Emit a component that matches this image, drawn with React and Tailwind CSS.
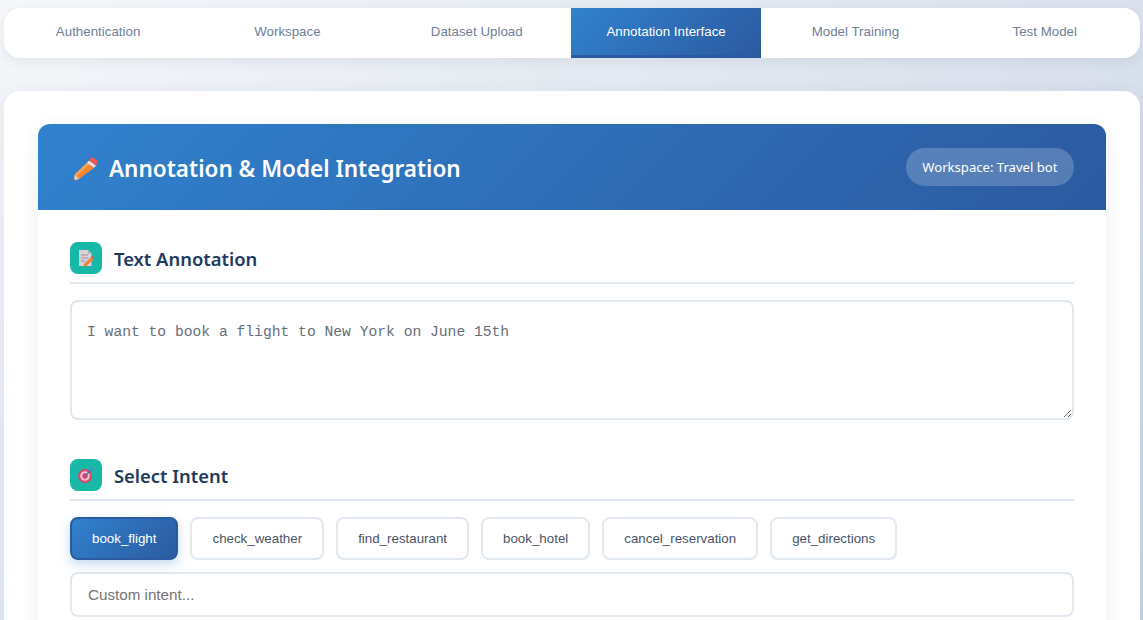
import React from 'react';

const TABS = ['Authentication', 'Workspace', 'Dataset Upload', 'Annotation Interface', 'Model Training', 'Test Model'];
const INTENTS = ['book_flight', 'check_weather', 'find_restaurant', 'book_hotel', 'cancel_reservation', 'get_directions'];

function PencilIcon() {
  return (
    <svg width="28" height="26" viewBox="0 0 28 26">
      <path d="M4.7 18.5 L16.7 7 L24.3 11.8 L9.3 22.8 Z" fill="#f58634" />
      <path d="M4.7 18.5 L16.7 7 L19 8.5 L6.5 20.2 Z" fill="#fba354" />
      <path d="M4.7 18.5 L9.3 22.8 L3.6 25 Z" fill="#f3c9a0" />
      <path d="M3.9 23 L5.6 24.2 L3.6 25 Z" fill="#5b3b52" />
      <path d="M16.7 7 L19 4.5 L26 9.5 L24.3 11.8 Z" fill="#eadfe2" />
      <path d="M19 4.5 L20.5 2 Q21.5 1 23 1.6 L27 4.5 Q28 5.5 27.2 7 L26 9.5 Z" fill="#f0584a" />
    </svg>
  );
}

function MemoIcon() {
  return (
    <svg width="16" height="18" viewBox="0 0 16 18">
      <path d="M1 1 H10 L13.5 4.5 V17 H1 Z" fill="#d9d0d8" />
      <path d="M10 1 L13.5 4.5 H10 Z" fill="#b5a9b5" />
      <path d="M3 6 H10 M3 9 H10 M3 12 H7" stroke="#9c8f9c" strokeWidth="1" />
      <path d="M6 15 L13 8 L15.5 10.5 L8.5 17 L5.5 17.5 Z" fill="#f0813a" />
      <path d="M13 8 L14 7 L16 9 L15.5 10.5 Z" fill="#e9505a" />
    </svg>
  );
}

function TargetIcon() {
  return (
    <svg width="18" height="18" viewBox="0 0 18 18">
      <circle cx="8" cy="10" r="7" fill="#d9476d" />
      <circle cx="8" cy="10" r="4.8" fill="#f3c4d2" />
      <circle cx="8" cy="10" r="2.8" fill="#d9476d" />
      <path d="M8 10 L15 3" stroke="#3f6fb0" strokeWidth="1.3" />
      <path d="M13.5 2.5 L15 0.8 L15.5 2.5 L17.4 3 L15.5 4.5 L13.6 4.4 Z" fill="#4a90d9" />
    </svg>
  );
}

function SectionTitle({ icon, children }) {
  return (
    <div className="flex items-center gap-3 border-b-2 border-[#e2e8f0] pb-2 mb-4">
      <div className="w-8 h-8 rounded-lg bg-[#17b8a6] flex items-center justify-center">
        {icon}
      </div>
      <h3 className="h-8 pt-px text-[18.4px] leading-[32px] font-semibold text-[#1e3a5f] font-['Noto_Sans',sans-serif]">{children}</h3>
    </div>
  );
}

export default function App() {
  return (
    <div className="h-[620px] overflow-hidden">
      <div className="h-[900px] bg-[linear-gradient(135deg,#f5f7fa_0%,#c3cfe2_100%)] pl-1 pr-[3px] pt-2 font-['Liberation_Sans',sans-serif]">
        <nav className="h-[50px] bg-white rounded-2xl overflow-hidden shadow-[0_4px_12px_rgba(30,58,95,0.08)]">
          <div className="flex h-full -ml-[0.6px] mr-[0.6px]">
            {TABS.map((tab) => (
              <div
                key={tab}
                className={
                  tab === 'Annotation Interface'
                    ? 'flex-1 flex items-center justify-center text-[13.33px] font-medium text-white bg-[linear-gradient(135deg,#3182ce,#2c5aa0)] border-b-[3px] border-[#2c5aa0]'
                    : 'flex-1 flex items-center justify-center text-[13.33px] font-medium text-[#718096] border-b-[3px] border-transparent'
                }
              >
                {tab}
              </div>
            ))}
          </div>
        </nav>

        <main className="mt-[33px] bg-white rounded-2xl pt-[33px] px-[34px] h-[600px] shadow-[0_4px_20px_rgba(30,58,95,0.08)]">
          <div className="rounded-xl shadow-[0_4px_20px_rgba(30,58,95,0.08)] h-[560px]">
            <header className="h-[86px] rounded-t-xl bg-[linear-gradient(135deg,#3182ce,#2c5aa0)] flex items-center justify-between px-8">
              <h2 className="flex items-center gap-[11px] pt-[3px] text-[22.5px] font-semibold text-white font-['Noto_Sans',sans-serif]">
                <PencilIcon />
                Annotation &amp; Model Integration
              </h2>
              <div className="h-[38px] px-[16.5px] pt-px rounded-[19px] bg-white/20 flex items-center text-[13.1px] text-white font-['Noto_Sans',sans-serif]">
                Workspace: Travel bot
              </div>
            </header>

            <div className="px-8 pt-8">
              <SectionTitle icon={<MemoIcon />}>Text Annotation</SectionTitle>
              <textarea
                readOnly
                value="I want to book a flight to New York on June 15th"
                className="block w-full h-[120px] border-2 border-[#e2e8f0] rounded-lg pl-[15px] pr-4 pt-[18px] text-[14.67px] leading-[24px] text-[#666e7a] font-['Liberation_Mono',monospace] outline-none resize-y"
              />

              <div className="mt-[39px]">
                <SectionTitle icon={<TargetIcon />}>Select Intent</SectionTitle>
                <div className="flex gap-3">
                  {INTENTS.map((intent) => (
                    <button
                      key={intent}
                      className={
                        intent === 'book_flight'
                          ? 'h-[43px] px-5 rounded-lg border-2 border-[#2c5aa0] text-[13.33px] font-medium text-white bg-[linear-gradient(135deg,#3182ce,#2c5aa0)] shadow-[0_4px_12px_rgba(49,130,206,0.3)]'
                          : 'h-[43px] px-5 rounded-lg border-2 border-[#e2e8f0] text-[13.33px] font-medium text-[#4a5568] bg-white'
                      }
                    >
                      {intent}
                    </button>
                  ))}
                </div>
                <input
                  readOnly
                  placeholder="Custom intent..."
                  className="block w-full h-[45px] mt-3 border-2 border-[#e2e8f0] rounded-lg px-4 text-[15.2px] text-[#4a5568] placeholder:text-[#757575] outline-none"
                />
              </div>
            </div>
          </div>
        </main>
      </div>
    </div>
  );
}
